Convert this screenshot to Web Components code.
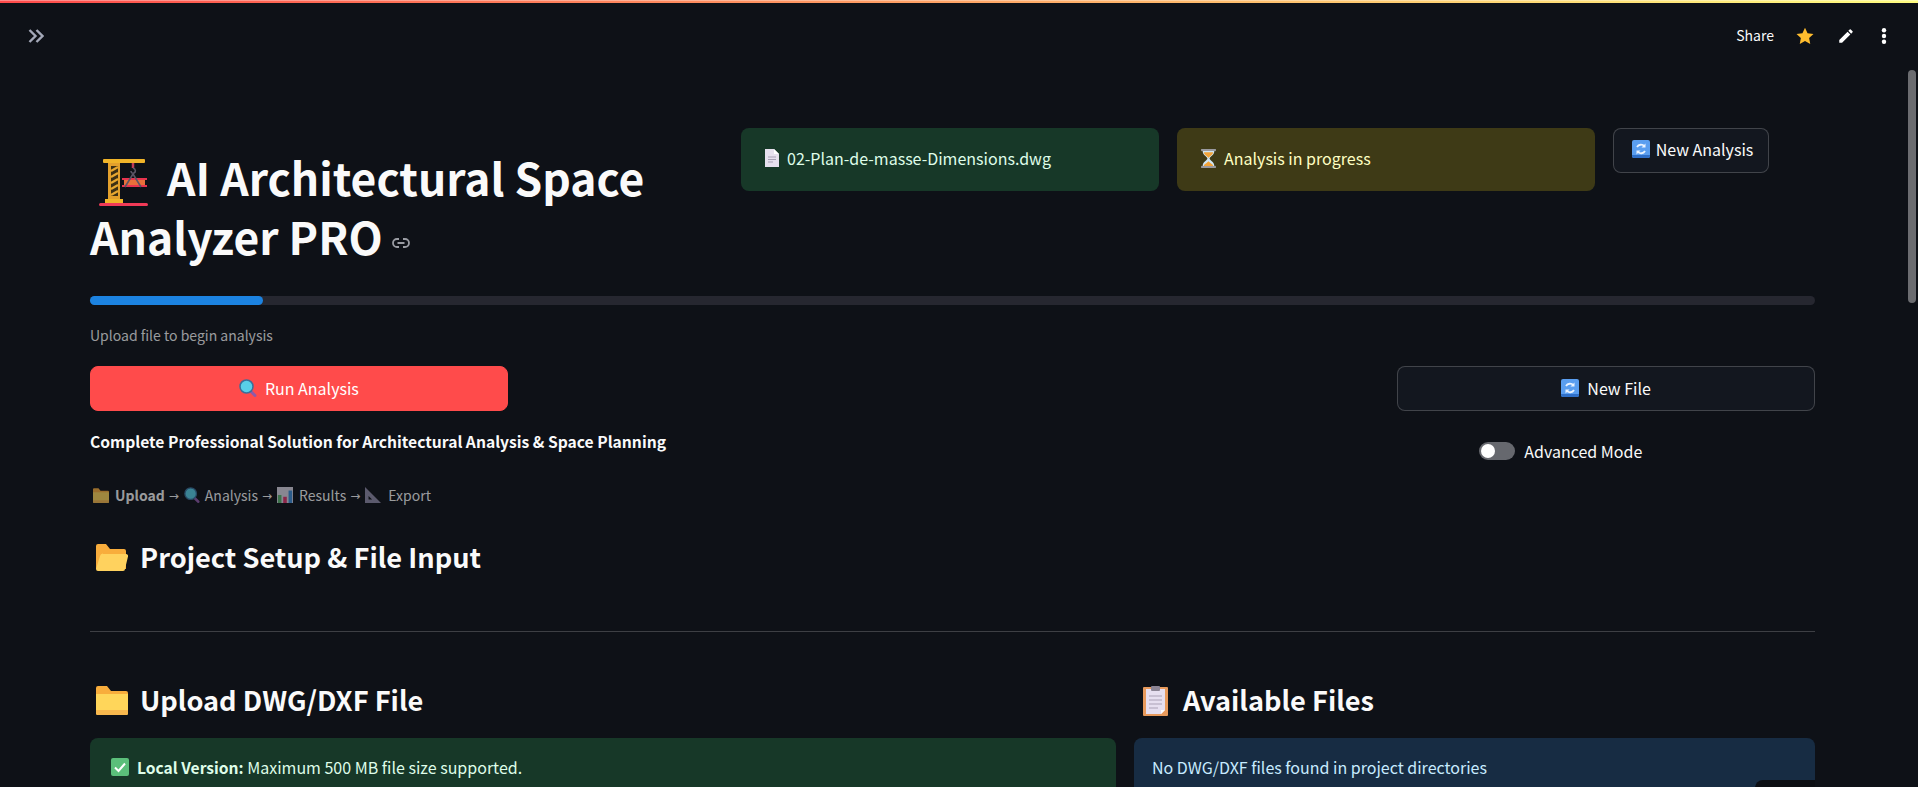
<!DOCTYPE html>
<html>
<head>
<meta charset="utf-8">
<title>AI Architectural Space Analyzer PRO</title>
<style>
  html, body { margin: 0; height: 100%; overflow: hidden; background: #0e1117; }
  body { font-family: "Noto Sans CJK SC", "Liberation Sans", sans-serif; color: #fafafa; }
</style>
</head>
<body>
<app-shell></app-shell>
<script>
// emoji drawn by hand, no emoji font here
const EMOJI = {
  crane: `<svg viewBox="0 0 49 47"><rect x="4" y="0" width="42" height="4" rx="1" fill="#f0b429"/><rect x="9" y="4" width="12" height="36" fill="#e3a02c"/><rect x="12" y="7" width="7" height="30" fill="#3d3014"/><path d="M12 12l7-4M12 18l7-4M12 24l7-4M12 30l7-4M12 36l7-4" stroke="#e8a830" stroke-width="2.200" fill="none"/><rect x="6" y="40" width="18" height="4" fill="#f0b429"/><rect x="0" y="44" width="49" height="3" rx="1.500" fill="#f03a57"/><rect x="23" y="19" width="25" height="2" fill="#e8344e"/><rect x="23" y="26" width="25" height="2" fill="#e8344e"/><rect x="25" y="21" width="21" height="5" fill="#e8703a"/><path d="M34 4v5" stroke="#c23a55" stroke-width="2.500"/><path d="M34 9c3 1 3 4 1 5-2 1-3-1-3-2M34 15l-8 13M34 15l8 13" stroke="#5b5566" stroke-width="1.600" fill="none"/></svg>`,
  page: `<svg viewBox="0 0 14 18"><path d="M0 0h9l5 5v13H0z" fill="#e6e0ee"/><path d="M9 0l5 5H9z" fill="#fff"/><path d="M3 8h8M3 10.500h8M3 13h5" stroke="#a7a0b5" stroke-width="1"/></svg>`,
  hourglass: `<svg viewBox="0 0 14 18"><rect x="0" y="0" width="14" height="2" fill="#9a9aa0"/><rect x="0" y="16" width="14" height="2" fill="#9a9aa0"/><path d="M1.500 2h11c0 4-4 5-4.500 7 .5 2 4.500 3 4.500 7h-11c0-4 4-5 4.500-7C5.500 7 1.500 6 1.500 2z" fill="#cfe6f5"/><path d="M2.500 3h9c-.5 3-4 4-4.500 5.500C6.500 7 3 6 2.500 3zM2.500 16c.3-2 3.500-3 4.500-4.500 1 1.500 4.200 2.500 4.500 4.500z" fill="#f2a43a"/></svg>`,
  refresh: `<svg viewBox="0 0 18 18"><rect width="18" height="18" rx="2" fill="#5a9ef0"/><path d="M0 15h18v1a2 2 0 0 1-2 2H2a2 2 0 0 1-2-2z" fill="#2f6fc8"/><path d="M12.500 6.500A4.500 4.500 0 0 0 5 7M5.500 11.500A4.500 4.500 0 0 0 13 11" stroke="#eaf3ff" stroke-width="1.800" fill="none"/><path d="M13.500 3.500v4h-4zM4.500 14.500v-4h4z" fill="#eaf3ff"/></svg>`,
  search: `<svg viewBox="0 0 18 18"><path d="M11 11.500l5 5" stroke="#8e5aa8" stroke-width="3" stroke-linecap="round"/><circle cx="7.500" cy="7.500" r="6.500" fill="#58cfe8" stroke="#3a6f9a" stroke-width="1.500"/></svg>`,
  folder: `<svg viewBox="0 0 32 29"><path d="M0 2a2 2 0 0 1 2-2h9l4 5h15a2 2 0 0 1 2 2v20a2 2 0 0 1-2 2H2a2 2 0 0 1-2-2z" fill="#f8ad3c"/><path d="M0 8h32v19a2 2 0 0 1-2 2H2a2 2 0 0 1-2-2z" fill="#ffd65a"/><path d="M0 24h32v3a2 2 0 0 1-2 2H2a2 2 0 0 1-2-2z" fill="#f8b84e"/></svg>`,
  folderOpen: `<svg viewBox="0 0 32 27"><path d="M0 2a2 2 0 0 1 2-2h8l4 5h14a2 2 0 0 1 2 2v18H0z" fill="#f8ad3c"/><path d="M7 10h23a2 2 0 0 1 2 2.500l-3 12.500a2 2 0 0 1-2 2H2a2 2 0 0 1-2-2l4-13a3 3 0 0 1 3-2.500z" fill="#ffd25e"/></svg>`,
  chart: `<svg viewBox="0 0 18 18"><rect width="18" height="18" fill="#d9d6e3"/><rect x="1" y="9" width="4" height="9" fill="#5bb26c"/><rect x="7" y="11" width="4" height="7" fill="#e0336a"/><rect x="13" y="4" width="4" height="14" fill="#3f8fd8"/></svg>`,
  triangle: `<svg viewBox="0 0 18 18"><path fill-rule="evenodd" d="M0 0l18 18H0zM4 10v4h4z" fill="#8f8ca6"/></svg>`,
  clipboard: `<svg viewBox="0 0 25 31"><rect y="2" width="25" height="29" rx="1" fill="#e79a5c"/><path d="M3 4h19v21l-4 4H3z" fill="#e6dff0"/><path d="M22 25l-4 4v-4z" fill="#fff"/><rect x="8" y="1" width="9" height="5" rx="1" fill="#8b8494"/><path d="M6 11h13M6 15h13M6 19h13M6 23h9" stroke="#a9a2b5" stroke-width="1.200"/></svg>`,
  check: `<svg viewBox="0 0 18 18"><rect width="18" height="18" rx="2" fill="#5bbf7a"/><path d="M4 9.500l3.500 3.500L14 5.500" stroke="#fff" stroke-width="2" fill="none"/></svg>`
};

class AppEmoji extends HTMLElement {
  connectedCallback() {
    if (!this.shadowRoot) this.attachShadow({ mode: 'open' });
    const w = this.getAttribute('w') || 18;
    const h = this.getAttribute('h') || 18;
    this.shadowRoot.innerHTML = `<style>:host{display:inline-block;line-height:0;flex:none;vertical-align:middle}svg{display:block;width:${w}px;height:${h}px}</style>${EMOJI[this.getAttribute('name')] || ''}`;
  }
}
customElements.define('app-emoji', AppEmoji);

const alertTpl = document.createElement('template');
alertTpl.innerHTML = `
<style>
  :host { display: flex; align-items: center; gap: 8px; box-sizing: border-box; border-radius: 8px; padding: 0 24px 3px; font-size: 16px; }
  :host([kind=green]) { background: rgba(61,213,109,.2); color: #dffde9; }
  :host([kind=yellow]) { background: rgba(255,227,18,.2); color: #ffffc2; }
  :host([kind=blue]) { background: rgba(61,157,243,.2); color: #c7ebff; }
  :host(.tall) { height: 63px; }
  :host(.open) { height: 80px; align-items: flex-start; padding: 17px 21px 0; line-height: 24px; }
</style>
<slot></slot>`;
class AlertBox extends HTMLElement {
  constructor() {
    super();
    this.attachShadow({ mode: 'open' }).appendChild(alertTpl.content.cloneNode(true));
  }
}
customElements.define('alert-box', AlertBox);

const btnTpl = document.createElement('template');
btnTpl.innerHTML = `
<style>
  :host { display: flex; align-items: center; justify-content: center; gap: 8px; box-sizing: border-box; height: 45px; padding-bottom: 2px; border-radius: 8px; font-size: 16px; border: 1px solid rgba(250,250,250,.2); background: #13171f; color: #fafafa; }
  :host([primary]) { background: #ff4b4b; border-color: #ff4b4b; color: #fff; }
</style>
<slot></slot>`;
class AppButton extends HTMLElement {
  constructor() {
    super();
    this.attachShadow({ mode: 'open' }).appendChild(btnTpl.content.cloneNode(true));
  }
}
customElements.define('app-button', AppButton);

const headTpl = document.createElement('template');
headTpl.innerHTML = `
<style>
  :host { display: flex; align-items: center; height: 72px; padding: 0 31px 0 28px; flex: none; box-sizing: border-box; }
  .grow { flex: 1; }
  .share { font-size: 14px; margin-right: 22px; padding-bottom: 2px; }
  svg { display: block; }
  .star { margin-right: 23px; }
  .pen { margin-right: 26px; }
</style>
<svg width="16" height="14" viewBox="0 0 16 14" fill="none" stroke="#a3a8b8" stroke-width="2.400"><path d="M1.500 1l6 6-6 6M8.500 1l6 6-6 6"/></svg>
<div class="grow"></div>
<span class="share">Share</span>
<svg class="star" width="18" height="18" viewBox="0 0 24 24" fill="#ffbd2e"><path d="M12 1l3.400 7.200 7.900 1-5.800 5.500 1.500 7.800-7-3.900-7 3.900 1.500-7.800L.7 9.200l7.900-1z"/></svg>
<svg class="pen" width="18" height="18" viewBox="0 0 24 24" fill="#fff"><path d="M3 17.250V21h3.750L17.810 9.940l-3.750-3.750L3 17.250zM20.710 7.040a1 1 0 0 0 0-1.410l-2.340-2.340a1 1 0 0 0-1.410 0l-1.830 1.830 3.750 3.750 1.830-1.830z"/></svg>
<svg width="6" height="16" viewBox="0 0 6 16" fill="#fff"><circle cx="3" cy="2.200" r="2.200"/><circle cx="3" cy="8" r="2.200"/><circle cx="3" cy="13.800" r="2.200"/></svg>`;
class AppHeader extends HTMLElement {
  constructor() {
    super();
    this.attachShadow({ mode: 'open' }).appendChild(headTpl.content.cloneNode(true));
  }
}
customElements.define('app-header', AppHeader);

const toggleTpl = document.createElement('template');
toggleTpl.innerHTML = `
<style>
  :host { display: flex; align-items: center; gap: 9px; font-size: 16px; line-height: 24px; height: 24px; }
  .track { width: 36px; height: 18px; border-radius: 9px; background: #66686e; position: relative; }
  .knob { position: absolute; left: 2px; top: 2px; width: 14px; height: 14px; border-radius: 50%; background: #fff; }
</style>
<div class="track"><div class="knob"></div></div><slot></slot>`;
class AppToggle extends HTMLElement {
  constructor() {
    super();
    this.attachShadow({ mode: 'open' }).appendChild(toggleTpl.content.cloneNode(true));
  }
}
customElements.define('app-toggle', AppToggle);

const shellTpl = document.createElement('template');
shellTpl.innerHTML = `
<style>
  :host { display: block; position: relative; height: 787px; overflow: hidden; background: #0e1117; }
  .deco { position: absolute; left: 0; right: 0; top: 0; height: 3px; background: linear-gradient(to bottom, rgba(255,255,255,.35) 1px, transparent 1px), linear-gradient(90deg, #ff4b4b, #fffd80); }
  .thumb { position: absolute; left: 1908px; top: 70px; width: 8px; height: 233px; border-radius: 4px; background: #6b6c70; }
  .manage { position: absolute; left: 1755px; top: 780px; width: 60px; height: 20px; border-radius: 8px 0 0 0; background: #0c0e13; }
  main { padding: 0 103px 0 90px; }
  .top { display: grid; grid-template-columns: 633px 418px 418px 202px; gap: 18px; padding-top: 56px; height: 168px; box-sizing: content-box; align-items: start; }
  h1 { margin: 0; font-size: 44.4px; line-height: 58.5px; font-weight: 700; padding-top: 20px; }
  h1 app-emoji { margin: 0 19px 0 9px; position: relative; top: -1px; }
  .link { margin-left: 9px; vertical-align: middle; }
  .bar { height: 9px; border-radius: 5px; background: #262730; }
  .bar i { display: block; width: 10%; height: 100%; border-radius: 5px; background: #1c83e1; }
  .cap { font-size: 14px; line-height: 20px; color: rgba(250,250,250,.6); margin-top: 20px; }
  .actions { display: grid; grid-template-columns: repeat(4, 1fr); column-gap: 18px; margin-top: 21px; }
  .actions .last { grid-column: 4; }
  .sub { display: grid; grid-template-columns: repeat(4, 1fr); column-gap: 18px; align-items: start; }
  .sub strong { grid-column: 1 / 4; font-size: 15.65px; font-weight: 700; line-height: 24px; margin-top: 19px; }
  .sub app-toggle { grid-column: 4; margin: 28px 0 0 82px; }
  .steps { display: flex; align-items: center; font-size: 14px; color: rgba(250,250,250,.6); line-height: 20px; margin: 22px 0 0 3px; }
  .steps app-emoji { opacity: .6; }
  .steps b { font-weight: 700; margin-left: 6px; }
  .steps span { margin-left: 5px; }
  .steps span.r { margin-left: 6px; }
  .steps span.e { margin-left: 7px; }
  .steps i { font-family: "DejaVu Sans", sans-serif; font-style: normal; font-size: 12px; margin: 0 5px 0 4px; position: relative; top: 1px; }
  h2 { display: flex; align-items: center; margin: 31px 0 0 6px; font-size: 27.200px; font-weight: 600; line-height: 40px; height: 40px; gap: 12px; }
  h2 app-emoji { position: relative; top: 1px; }
  hr { border: 0; height: 1px; background: rgba(250,250,250,.2); margin: 55px 0 0; }
  .cols { display: grid; grid-template-columns: 1026px 681px; column-gap: 18px; margin-top: 47px; }
  .cols h2 { margin-top: 0; }
  .cols alert-box { margin-top: 19px; }
</style>
<div class="deco"></div>
<app-header></app-header>
<main>
  <div class="top">
    <h1><app-emoji name="crane" w="49" h="47"></app-emoji>AI Architectural Space Analyzer PRO<svg class="link" width="18" height="10" viewBox="0 0 18 10" fill="none" stroke="#9a9ca3" stroke-width="1.800"><path d="M7 1H5a4 4 0 0 0 0 8h2M11 1h2a4 4 0 0 1 0 8h-2M5.500 5h7"/></svg></h1>
    <alert-box class="tall" kind="green"><app-emoji name="page" w="14" h="18"></app-emoji>02-Plan-de-masse-Dimensions.dwg</alert-box>
    <alert-box class="tall" kind="yellow"><app-emoji name="hourglass" w="15" h="19"></app-emoji>Analysis in progress</alert-box>
    <app-button style="width:156px;gap:6px;padding:0 0 4px 3px"><app-emoji name="refresh"></app-emoji>New Analysis</app-button>
  </div>
  <div class="bar"><i></i></div>
  <div class="cap">Upload file to begin analysis</div>
  <div class="actions">
    <app-button primary><app-emoji name="search"></app-emoji>Run Analysis</app-button>
    <app-button class="last"><app-emoji name="refresh"></app-emoji>New File</app-button>
  </div>
  <div class="sub">
    <strong>Complete Professional Solution for Architectural Analysis &amp; Space Planning</strong>
    <app-toggle>Advanced Mode</app-toggle>
  </div>
  <div class="steps"><app-emoji name="folder" w="16" h="15"></app-emoji><b>Upload</b><i>→</i><app-emoji name="search" w="16" h="16"></app-emoji><span>Analysis</span><i>→</i><app-emoji name="chart" w="16" h="16"></app-emoji><span class="r">Results</span><i>→</i><app-emoji name="triangle" w="16" h="16"></app-emoji><span class="e">Export</span></div>
  <h2><app-emoji name="folderOpen" w="32" h="27"></app-emoji>Project Setup &amp; File Input</h2>
  <hr>
  <div class="cols">
    <div>
      <h2><app-emoji name="folder" w="32" h="29"></app-emoji>Upload DWG/DXF File</h2>
      <alert-box class="open" kind="green"><app-emoji name="check" style="margin-top:3px"></app-emoji><span><b style="font-weight:700;font-size:15.6px">Local Version:</b> Maximum 500 MB file size supported.</span></alert-box>
    </div>
    <div>
      <h2 style="margin-left:9px;gap:15px"><app-emoji name="clipboard" w="25" h="31"></app-emoji>Available Files</h2>
      <alert-box class="open" kind="blue" style="padding-left:18px">No DWG/DXF files found in project directories</alert-box>
    </div>
  </div>
</main>
<div class="thumb"></div>
<div class="manage"></div>`;
class AppShell extends HTMLElement {
  constructor() {
    super();
    this.attachShadow({ mode: 'open' }).appendChild(shellTpl.content.cloneNode(true));
  }
}
customElements.define('app-shell', AppShell);
</script>
</body>
</html>
